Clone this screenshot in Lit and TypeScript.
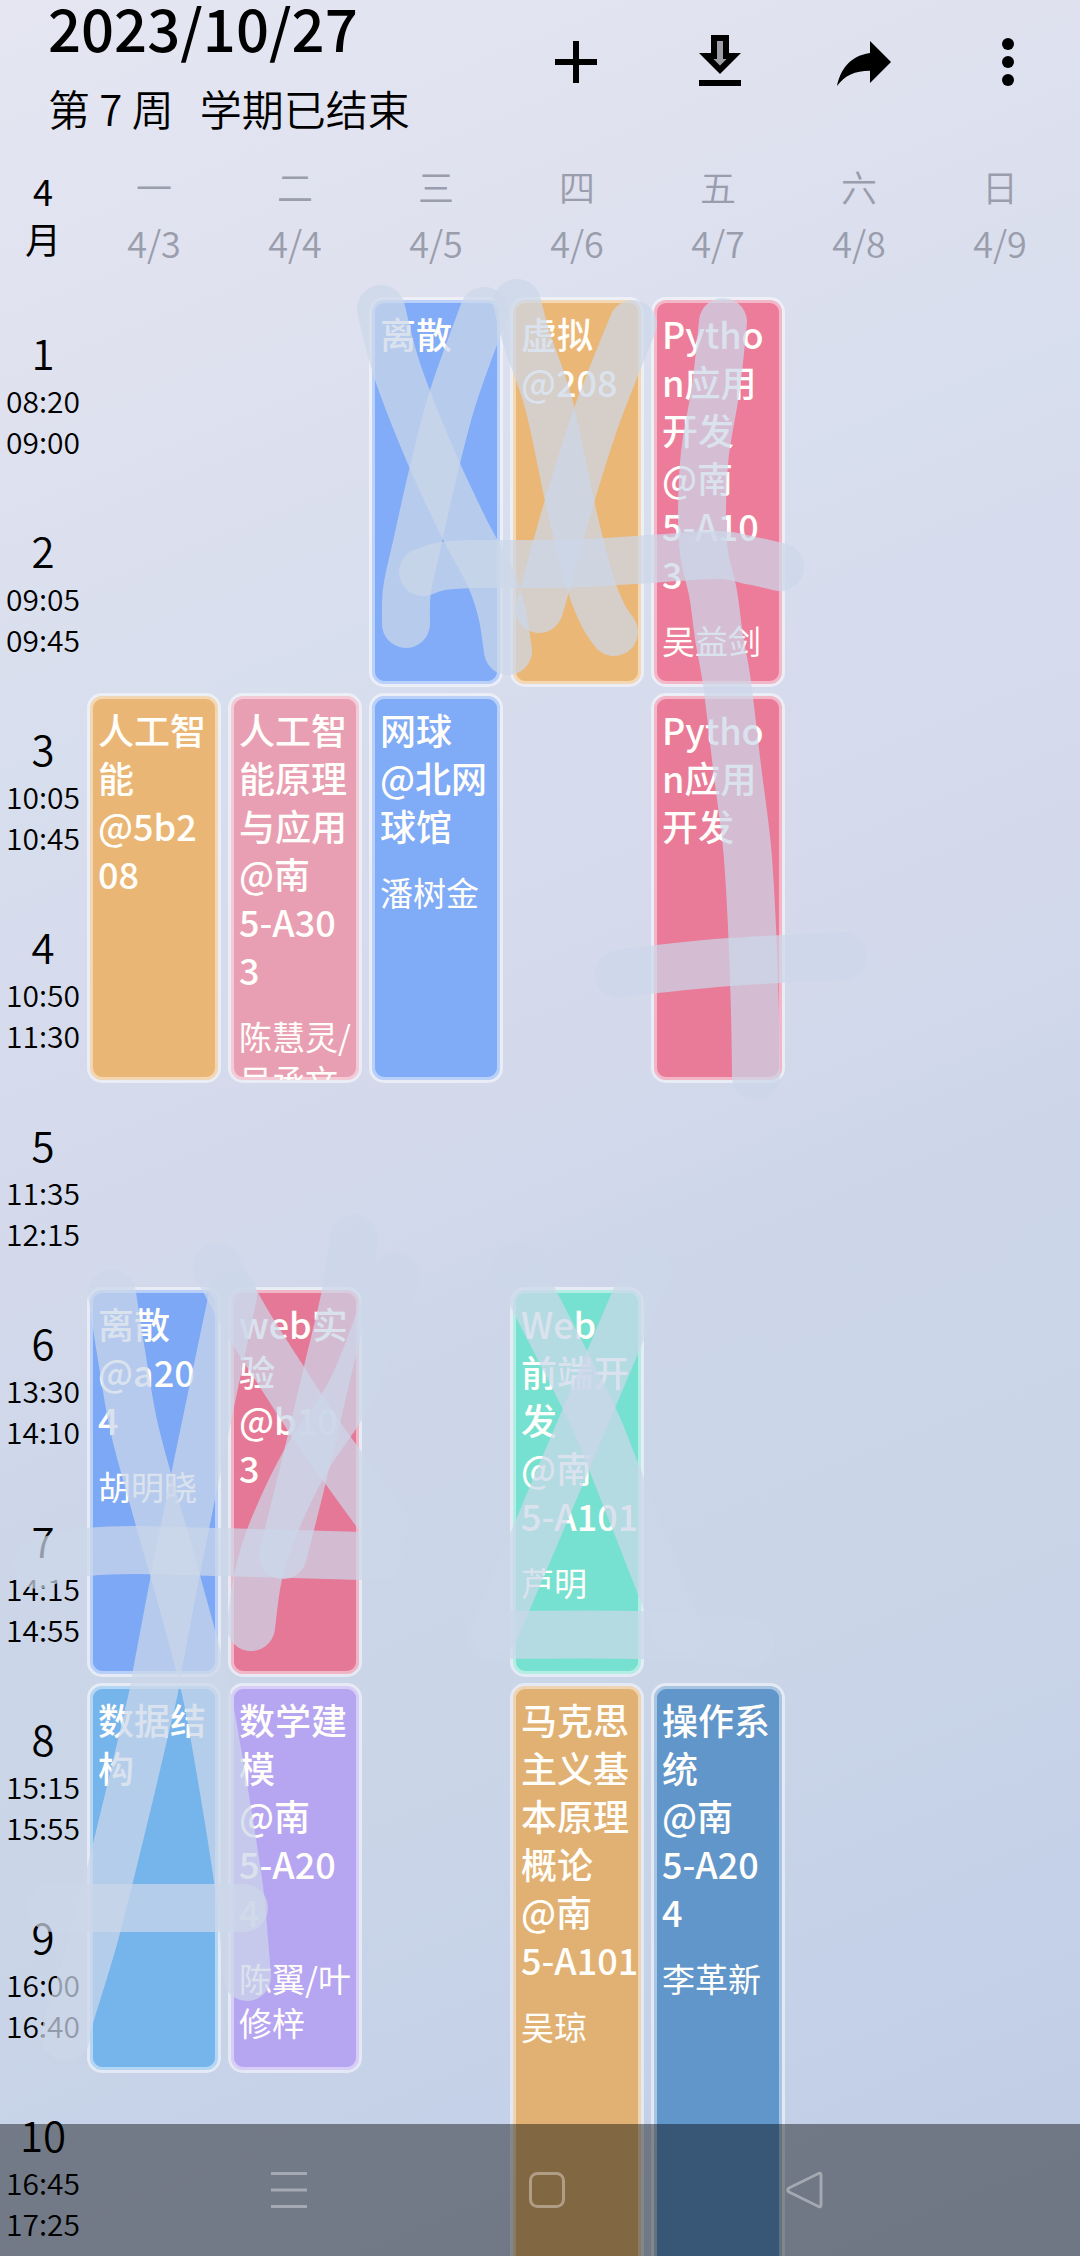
import { LitElement, html, svg, css } from "lit";
import { customElement, property } from "lit/decorators.js";
import { styleMap } from "lit/directives/style-map.js";

type Point = [number, number];

interface Course {
  day: number;
  start: number;
  span: number;
  tone: string;
  lines: string[];
  teacher?: string[];
}

const DAYS = [
  ["一", "4/3"],
  ["二", "4/4"],
  ["三", "4/5"],
  ["四", "4/6"],
  ["五", "4/7"],
  ["六", "4/8"],
  ["日", "4/9"],
];

const PERIODS = [
  ["08:20", "09:00"],
  ["09:05", "09:45"],
  ["10:05", "10:45"],
  ["10:50", "11:30"],
  ["11:35", "12:15"],
  ["13:30", "14:10"],
  ["14:15", "14:55"],
  ["15:15", "15:55"],
  ["16:00", "16:40"],
  ["16:45", "17:25"],
];

const COURSES: Course[] = [
  { day: 3, start: 1, span: 2, tone: "#82acf8", lines: ["离散"] },
  { day: 4, start: 1, span: 2, tone: "#ebb776", lines: ["虚拟", "@208"] },
  { day: 5, start: 1, span: 2, tone: "#ec7c9a", lines: ["Pytho", "n应用", "开发", "@南", "5-A10", "3"], teacher: ["吴益剑"] },
  { day: 1, start: 3, span: 2, tone: "#eab676", lines: ["人工智", "能", "@5b2", "08"] },
  { day: 2, start: 3, span: 2, tone: "#e99fb3", lines: ["人工智", "能原理", "与应用", "@南", "5-A30", "3"], teacher: ["陈慧灵/", "吴承文"] },
  { day: 3, start: 3, span: 2, tone: "#80abf6", lines: ["网球", "@北网", "球馆"], teacher: ["潘树金"] },
  { day: 5, start: 3, span: 2, tone: "#e97a98", lines: ["Pytho", "n应用", "开发"] },
  { day: 1, start: 6, span: 2, tone: "#7ca8f5", lines: ["离散", "@a20", "4"], teacher: ["胡明晓"] },
  { day: 2, start: 6, span: 2, tone: "#e67897", lines: ["web实", "验", "@b10", "3"] },
  { day: 4, start: 6, span: 2, tone: "#76e1d0", lines: ["Web", "前端开", "发", "@南", "5-A101"], teacher: ["芦明"] },
  { day: 1, start: 8, span: 2, tone: "#76b4ec", lines: ["数据结", "构"] },
  { day: 2, start: 8, span: 2, tone: "#b6a5f1", lines: ["数学建", "模", "@南", "5-A20", "4"], teacher: ["陈翼/叶", "修梓"] },
  { day: 4, start: 8, span: 3, tone: "#e1b174", lines: ["马克思", "主义基", "本原理", "概论", "@南", "5-A101"], teacher: ["吴琼"] },
  { day: 5, start: 8, span: 3, tone: "#6196cb", lines: ["操作系", "统", "@南", "5-A20", "4"], teacher: ["李革新"] },
];

/* Marker strokes drawn freehand over the timetable. */
const STROKES: Point[][] = [
  [[381, 309], [397, 370], [431, 457], [464, 528], [490, 577], [502, 613], [508, 651]],
  [[484, 311], [453, 397], [433, 473], [417, 544], [407, 590], [406, 624]],
  [[517, 303], [527, 340], [549, 405], [570, 503], [590, 582], [603, 615], [614, 632]],
  [[633, 324], [597, 415], [569, 503], [544, 592], [539, 609]],
  [[423, 572], [443, 566], [478, 564], [527, 564], [587, 563], [650, 559], [718, 555], [753, 561], [780, 567]],
  [[723, 322], [716, 387], [705, 453], [702, 510], [704, 553], [713, 593], [719, 637], [727, 683], [737, 767], [747, 847], [752, 927], [755, 1013], [756, 1076]],
  [[619, 974], [657, 969], [730, 962], [843, 956]],
  [[112, 1294], [121, 1352], [134, 1427], [155, 1505], [175, 1575], [202, 1675], [214, 1733], [238, 1880], [244, 1940], [247, 1977]],
  [[233, 1295], [195, 1477], [174, 1582], [157, 1672], [153, 1695], [130, 1793], [96, 1930], [68, 2023], [66, 2037]],
  [[217, 1267], [247, 1322], [282, 1377], [315, 1428], [345, 1470], [385, 1525]],
  [[354, 1239], [345, 1297], [328, 1369], [313, 1433], [300, 1487], [283, 1555]],
  [[395, 1277], [353, 1387], [306, 1460], [273, 1529], [258, 1577], [251, 1627]],
  [[38, 1565], [60, 1557], [87, 1552], [135, 1550], [220, 1552], [362, 1556], [378, 1557]],
  [[517, 1267], [589, 1408], [613, 1465], [667, 1603], [677, 1630]],
  [[648, 1270], [636, 1297], [589, 1408], [538, 1529], [495, 1630]],
  [[490, 1635], [640, 1635], [750, 1643]],
  [[52, 1908], [244, 1908]],
];

/** Turns a list of points into a smooth Catmull-Rom curve. */
function smooth(points: Point[]): string {
  const at = (i: number) => points[Math.max(0, Math.min(points.length - 1, i))];
  let d = `M${points[0].join(" ")}`;
  for (let i = 0; i < points.length - 1; i++) {
    const [p0, p1, p2, p3] = [at(i - 1), at(i), at(i + 1), at(i + 2)];
    const c1 = [p1[0] + (p2[0] - p0[0]) / 6, p1[1] + (p2[1] - p0[1]) / 6];
    const c2 = [p2[0] - (p3[0] - p1[0]) / 6, p2[1] - (p3[1] - p1[1]) / 6];
    d += `C${[...c1, ...c2, ...p2].map((n) => n.toFixed(1)).join(" ")}`;
  }
  return d;
}

@customElement("course-card")
class CourseCard extends LitElement {
  @property({ attribute: false }) course!: Course;

  static styles = css`
    :host {
      display: block;
      box-sizing: border-box;
      min-width: 0;
      min-height: 0;
      height: 100%;
    }
    .card {
      box-sizing: border-box;
      height: 100%;
      overflow: hidden;
      border: 3px solid rgba(255, 255, 255, 0.5);
      border-radius: 15px;
      background-clip: padding-box;
      box-shadow: inset 0 0 0 3px rgba(255, 255, 255, 0.45);
      padding: 9px 0 0 8px;
      color: #fffefa;
      white-space: nowrap;
    }
    .title {
      margin: 0;
      font-size: 36px;
      font-weight: 500;
      line-height: 48px;
    }
    .teacher {
      margin: 21px 0 0;
      font-size: 33px;
      line-height: 44px;
    }
    .line {
      display: block;
    }
  `;

  render() {
    const { tone, lines, teacher } = this.course;
    return html`<article class="card" style=${styleMap({ backgroundColor: tone })}>
      <h2 class="title">${lines.map((l) => html`<span class="line">${l}</span>`)}</h2>
      ${teacher ? html`<p class="teacher">${teacher.map((l) => html`<span class="line">${l}</span>`)}</p>` : null}
    </article>`;
  }
}

@customElement("app-root")
class AppRoot extends LitElement {
  static styles = css`
    :host {
      display: block;
      position: relative;
      height: 100vh;
      overflow: hidden;
      color: #000;
      font-family: "Noto Sans CJK SC", sans-serif;
      background: linear-gradient(158deg, #e5e6f2 0%, #dfe1ef 16%, #d7deed 29%, #d5daec 42%, #d2d9eb 50%, #cdd6e9 57%, #cad5e8 72%, #c5d1e8 86%, #bfcce4 100%);
    }
    .topbar {
      display: flex;
      align-items: flex-start;
      justify-content: space-between;
      padding-left: 48px;
      height: 131px;
    }
    .date {
      margin: 0;
      font-size: 58px;
      font-weight: 500;
      line-height: 54px;
    }
    .week {
      display: flex;
      gap: 26px;
      margin: 30px 0 0;
      font-size: 42px;
      font-weight: 350;
      line-height: 48px;
      white-space: nowrap;
    }
    .actions {
      display: flex;
    }
    button {
      display: flex;
      align-items: center;
      justify-content: center;
      margin: 0;
      padding: 0;
      border: 0;
      background: none;
      color: inherit;
    }
    .action {
      width: 144px;
      height: 124px;
    }
    .action svg {
      width: 72px;
      height: 72px;
      fill: currentColor;
    }
    .days,
    .table {
      display: grid;
      grid-template-columns: 80px repeat(7, minmax(0, 1fr));
      column-gap: 7px;
      padding-right: 13px;
    }
    .days {
      height: 166px;
      align-items: center;
      text-align: center;
      font-size: 36px;
    }
    .month {
      display: flex;
      flex-direction: column;
      padding-left: 6px;
      font-weight: 400;
      line-height: 48px;
    }
    .day {
      display: flex;
      flex-direction: column;
      font-weight: 350;
      line-height: 56px;
      color: #9a9dac;
    }
    .table {
      grid-template-rows: repeat(10, 192px);
      row-gap: 6px;
    }
    .period {
      display: flex;
      flex-direction: column;
      justify-content: center;
      padding-left: 6px;
      text-align: center;
      font-size: 30px;
      font-weight: 350;
      line-height: 41px;
    }
    .number {
      font-size: 42px;
      line-height: 56px;
    }
    .marker {
      position: absolute;
      top: 0;
      left: 0;
      width: 100%;
      pointer-events: none;
      fill: none;
      stroke: rgba(204, 215, 233, 0.72);
      stroke-width: 48;
      stroke-linecap: round;
      stroke-linejoin: round;
    }
    .navbar {
      position: absolute;
      left: 0;
      right: 0;
      bottom: 0;
      display: flex;
      justify-content: center;
      box-sizing: border-box;
      height: 132px;
      padding-left: 14px;
      background: rgba(0, 0, 0, 0.42);
      color: rgba(255, 255, 255, 0.36);
    }
    .nav {
      width: 258px;
      height: 132px;
    }
    .nav svg {
      width: 40px;
      height: 40px;
      fill: none;
      stroke: currentColor;
      stroke-width: 3;
      stroke-linejoin: round;
    }
  `;

  render() {
    return html`
      <header class="topbar">
        <div>
          <h1 class="date">2023/10/27</h1>
          <p class="week"><span>第 7 周</span><span>学期已结束</span></p>
        </div>
        <div class="actions">
          <button class="action" aria-label="添加">
            <svg viewBox="0 0 24 24"><path d="M19 13h-6v6h-2v-6H5v-2h6V5h2v6h6z" /></svg>
          </button>
          <button class="action" aria-label="导入">
            <svg viewBox="0 0 24 24">
              <path opacity=".3" d="M13 5h-2v6H9.830L12 13.170 14.170 11H13z" />
              <path d="M15 9V3H9v6H5l7 7 7-7h-4zm-3 4.170L9.830 11H11V5h2v6h1.170L12 13.170zM5 18h14v2H5z" />
            </svg>
          </button>
          <button class="action" aria-label="分享">
            <svg viewBox="0 0 24 24"><path d="M14 9V5l7 7-7 7v-4.100c-5 0-8.500 1.600-11 5.100 1-5 4-10 11-11z" /></svg>
          </button>
          <button class="action" aria-label="更多">
            <svg viewBox="0 0 24 24"><circle cx="12" cy="6" r="2" /><circle cx="12" cy="12" r="2" /><circle cx="12" cy="18" r="2" /></svg>
          </button>
        </div>
      </header>

      <div class="days">
        <div class="month"><span>4</span><span>月</span></div>
        ${DAYS.map(([name, date]) => html`<div class="day"><span>${name}</span><span>${date}</span></div>`)}
      </div>

      <main class="table">
        ${PERIODS.map(
          ([from, to], i) => html`<div class="period" style=${styleMap({ gridColumn: "1", gridRow: `${i + 1}` })}>
            <span class="number">${i + 1}</span><span>${from}</span><span>${to}</span>
          </div>`
        )}
        ${COURSES.map(
          (c) => html`<course-card
            .course=${c}
            style=${styleMap({ gridColumn: `${c.day + 1}`, gridRow: `${c.start} / span ${c.span}` })}
          ></course-card>`
        )}
      </main>

      <svg class="marker" viewBox="0 0 1080 2256" aria-hidden="true">
        ${STROKES.map((s) => svg`<path d=${smooth(s)} />`)}
      </svg>

      <nav class="navbar">
        <button class="nav" aria-label="最近任务">
          <svg viewBox="0 0 40 40"><path d="M2 3.500h36M2 20h36M2 36.500h36" /></svg>
        </button>
        <button class="nav" aria-label="主屏幕">
          <svg viewBox="0 0 40 40"><rect x="3.500" y="3.500" width="33" height="33" rx="7" /></svg>
        </button>
        <button class="nav" aria-label="返回">
          <svg viewBox="0 0 40 40"><path d="M33.500 3.500Q36 2.500 36 5v30q0 2.500-2.500 1.500L4 22q-2.500-2 0-4z" /></svg>
        </button>
      </nav>
    `;
  }
}
